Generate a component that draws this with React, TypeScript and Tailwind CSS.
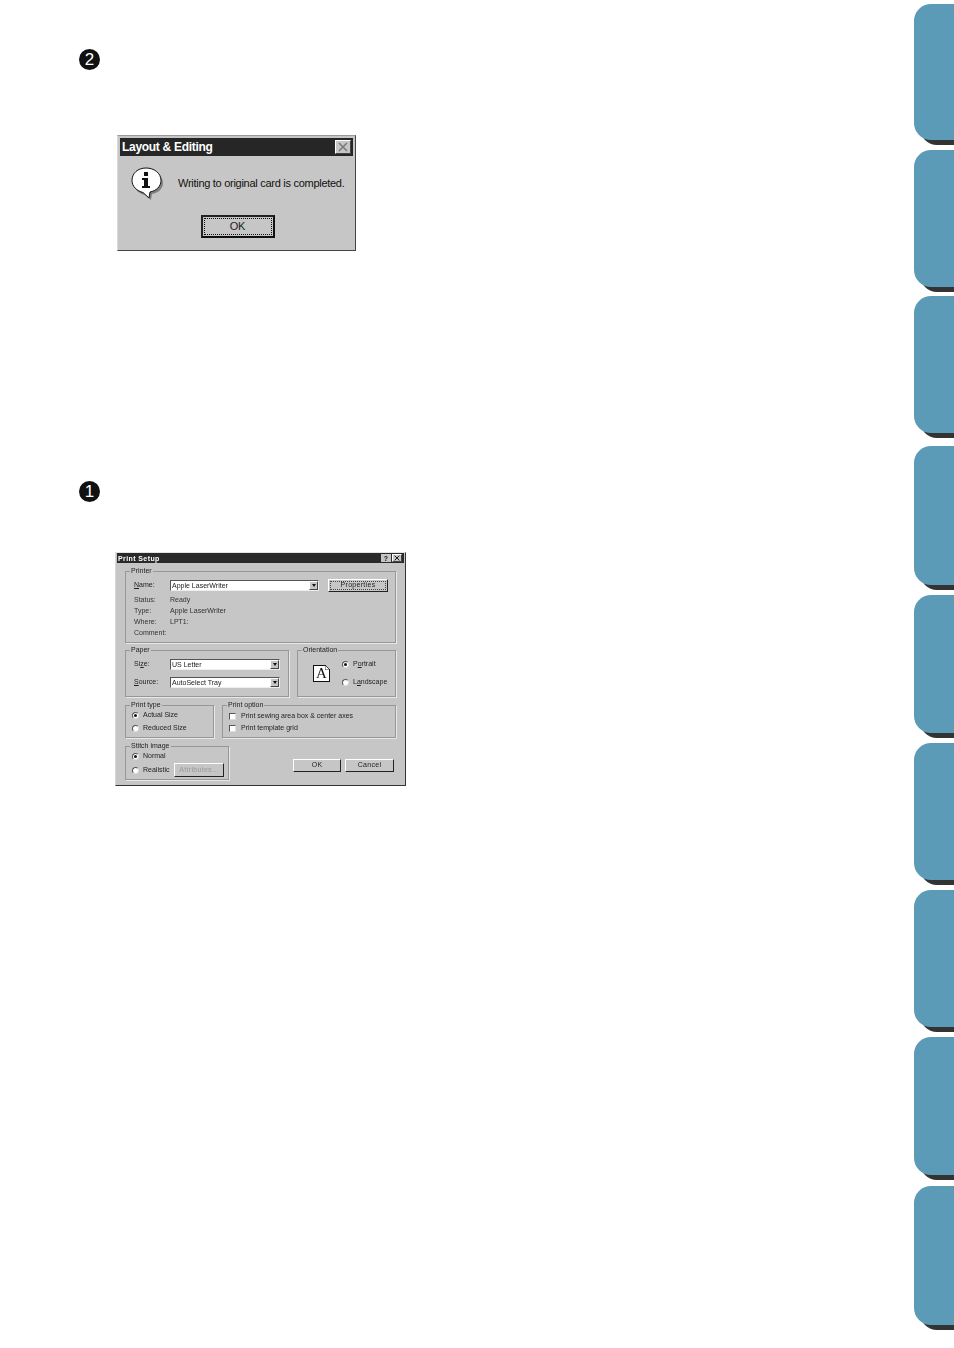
const font = { fontFamily: '"Liberation Sans", Arial, sans-serif' };

const tabs = [
  "h-[136px] mb-[10px]",
  "h-[137px] mb-[9px]",
  "h-[137px] mb-[13px]",
  "h-[139px] mb-[10px]",
  "h-[138px] mb-[10px]",
  "h-[137px] mb-[10px]",
  "h-[137px] mb-[10px]",
  "h-[138px] mb-[11px]",
  "h-[139px]",
];

function Marker({ n }: { n: number }) {
  return (
    <div className="flex h-[21px] w-[21px] items-center justify-center rounded-full bg-[#111] text-[17px] leading-none text-white">
      {n}
    </div>
  );
}

function InfoIcon() {
  return (
    <svg width="33" height="33" viewBox="0 0 33 33" className="shrink-0">
      <path d="M17 4C25 4 32 9 32 16C32 22 27 26 21 27L20 33L14 28C8 27 3 22 3 16C3 9 9 4 17 4Z" fill="#808080" />
      <path d="M15 1C23 1 30 6 30 13.500C30 19.500 25 24 19 25L18 31L12 25.500C6 24 1 19.500 1 13.500C1 6 7 1 15 1Z" fill="#fff" stroke="#111" strokeWidth="1" />
      <rect x="13" y="5" width="4" height="4" fill="#111" />
      <path d="M11 11H17V19H19V21H11V19H13V13H11Z" fill="#111" />
    </svg>
  );
}

function CloseBox({ big }: { big?: boolean }) {
  return (
    <div
      className={
        big
          ? "flex h-[14px] w-[16px] items-center justify-center border border-t-white border-l-white border-r-[#444] border-b-[#444] bg-[#c6c6c6]"
          : "flex h-[8px] w-[10px] items-center justify-center border border-t-white border-l-white border-r-[#444] border-b-[#444] bg-[#c6c6c6]"
      }
    >
      <svg viewBox="0 0 10 10" className={big ? "h-[10px] w-[10px]" : "h-[6px] w-[6px]"}>
        <path d="M1 1L9 9M9 1L1 9" stroke={big ? "#7a7a7a" : "#111"} strokeWidth="1.600" />
      </svg>
    </div>
  );
}

function MessageDialog() {
  return (
    <div className="ml-[38px] mt-[65px] h-[116px] w-[239px] border border-t-[#9a9a9a] border-l-[#d8d8d8] border-r-[#444] border-b-[#444] bg-[#c6c6c6] p-[2px]">
      <div className="flex h-[18px] items-center justify-between bg-[#262626] pl-[2px] pr-[2px]">
        <span className="text-[12px] font-bold tracking-[-0.3px] text-white">Layout &amp; Editing</span>
        <CloseBox big />
      </div>
      <div className="flex items-start pl-[11px] pt-[11px]">
        <InfoIcon />
        <span className="ml-[14px] mt-[9px] whitespace-nowrap text-[11px] leading-[14px] tracking-[-0.28px] text-[#111]">
          Writing to original card is completed.
        </span>
      </div>
      <div className="ml-[2px] mt-[15px] flex justify-center">
        <div className="flex h-[23px] w-[74px] items-center justify-center border-2 border-t-[#222] border-l-[#222] border-r-[#111] border-b-[#111] bg-[#c6c6c6] p-[1px]">
          <div className="flex h-full w-full items-center justify-center border border-dotted border-[#111] text-[11px] tracking-[-0.3px] text-[#222]">
            OK
          </div>
        </div>
      </div>
    </div>
  );
}

function Group({ title, className, children }: { title: string; className: string; children?: React.ReactNode }) {
  return (
    <fieldset className={"border border-[#979797] shadow-[1px_1px_0_#e8e8e8] " + className}>
      <legend className="ml-[4px] px-[1px] text-[7px] leading-[8px] text-[#222]">{title}</legend>
      {children}
    </fieldset>
  );
}

function Combo({ value, className }: { value: string; className: string }) {
  return (
    <div className={"flex h-[11px] items-center justify-between border border-t-[#555] border-l-[#555] border-r-[#eee] border-b-[#eee] bg-white pl-[1px] " + className}>
      <span className="text-[7px] leading-none text-[#222]">{value}</span>
      <div className="flex h-[9px] w-[9px] items-center justify-center border border-r-[#444] border-b-[#444] border-t-white border-l-white bg-[#c6c6c6]">
        <div className="h-0 w-0 border-x-[2.5px] border-t-[3px] border-x-transparent border-t-[#111]" />
      </div>
    </div>
  );
}

function Radio({ label, checked, className }: { label: React.ReactNode; checked?: boolean; className?: string }) {
  return (
    <div className={"flex items-center gap-[4px] pl-[1px] " + (className ?? "")}>
      <div className="flex h-[7px] w-[7px] shrink-0 items-center justify-center rounded-full border border-t-[#555] border-l-[#555] border-r-[#ddd] border-b-[#ddd] bg-white">
        {checked && <div className="h-[3px] w-[3px] rounded-full bg-[#111]" />}
      </div>
      <span className="whitespace-nowrap text-[7px] leading-[8px] text-[#222]">{label}</span>
    </div>
  );
}

function Check({ label }: { label: string }) {
  return (
    <div className="flex items-center gap-[5px]">
      <div className="h-[7px] w-[7px] shrink-0 border border-t-[#555] border-l-[#555] border-r-[#ddd] border-b-[#ddd] bg-white" />
      <span className="whitespace-nowrap text-[7px] leading-[8px] text-[#222]">{label}</span>
    </div>
  );
}

function Info({ label, value }: { label: string; value?: string }) {
  return (
    <div className="flex h-[11px] items-center text-[7px] text-[#333]">
      <span className="w-[36px]">{label}</span>
      <span>{value}</span>
    </div>
  );
}

function PushButton({ label, className, dim }: { label: string; className: string; dim?: boolean }) {
  return (
    <div
      className={
        "flex items-center justify-center border border-t-white border-l-white border-r-[#222] border-b-[#222] text-[7px] tracking-[0.3px] " +
        (dim ? "text-[#999] " : "text-[#222] ") +
        className
      }
    >
      {label}
    </div>
  );
}

function PrintSetup() {
  return (
    <div className="ml-[36px] mt-[50px] h-[234px] w-[291px] border border-t-[#e4e4e4] border-l-[#d8d8d8] border-r-[#333] border-b-[#333] bg-[#c6c6c6] blur-[0.3px]">
      <div className="mx-[1px] flex h-[10px] items-center justify-between bg-[#2a2a2a] pl-[1px] pr-[2px]">
        <span className="text-[7px] font-bold leading-none tracking-[0.4px] text-white">Print Setup</span>
        <div className="flex gap-[1px]">
          <div className="flex h-[8px] w-[10px] items-center justify-center bg-[#c6c6c6] text-[7px] font-bold leading-none text-[#111]">?</div>
          <CloseBox />
        </div>
      </div>
      <div className="flex flex-col gap-[3px] px-[9px] pt-[4px]">
        <Group title="Printer" className="h-[76px]">
          <div className="pl-[8px] pt-[4px]">
            <div className="flex h-[13px] items-center">
              <span className="w-[36px] text-[7px] text-[#222]">
                <span className="underline">N</span>ame:
              </span>
              <Combo value="Apple LaserWriter" className="w-[149px]" />
              <div className="ml-[9px] flex h-[13px] w-[60px] items-center justify-center border border-r-[#222] border-b-[#222] border-t-white border-l-white p-[1px]">
                <div className="flex h-full w-full items-center justify-center border border-dotted border-[#444] text-[7px] tracking-[0.3px] text-[#222]">
                  Properties
                </div>
              </div>
            </div>
            <div className="mt-[3px]">
              <Info label="Status:" value="Ready" />
              <Info label="Type:" value="Apple LaserWriter" />
              <Info label="Where:" value="LPT1:" />
              <Info label="Comment:" />
            </div>
          </div>
        </Group>
        <div className="flex gap-[8px]">
          <Group title="Paper" className="h-[51px] w-[164px]">
            <div className="flex flex-col gap-[7px] pl-[8px] pt-[5px]">
              <div className="flex items-center">
                <span className="w-[36px] text-[7px] text-[#222]">
                  Si<span className="underline">z</span>e:
                </span>
                <Combo value="US Letter" className="w-[110px]" />
              </div>
              <div className="flex items-center">
                <span className="w-[36px] text-[7px] text-[#222]">
                  <span className="underline">S</span>ource:
                </span>
                <Combo value="AutoSelect Tray" className="w-[110px]" />
              </div>
            </div>
          </Group>
          <Group title="Orientation" className="h-[51px] w-[99px]">
            <div className="flex items-center pl-[15px] pt-[6px]">
              <div className="relative flex h-[17px] w-[17px] items-center justify-center border border-[#111] bg-white font-['Liberation_Serif'] text-[15px] leading-none text-[#111]">
                A
                <svg viewBox="0 0 5 5" className="absolute right-[-1px] top-[-1px] h-[5px] w-[5px]">
                  <path d="M0 0H5V5Z" fill="#c6c6c6" />
                  <path d="M0 0V5H5Z" fill="#fff" />
                  <path d="M0 0L5 5M0 0V5H5" fill="none" stroke="#111" strokeWidth="0.800" />
                </svg>
              </div>
              <div className="ml-[11px] flex flex-col gap-[10px]">
                <Radio
                  label={
                    <>
                      P<span className="underline">o</span>rtrait
                    </>
                  }
                  checked
                />
                <Radio
                  label={
                    <>
                      L<span className="underline">a</span>ndscape
                    </>
                  }
                />
              </div>
            </div>
          </Group>
        </div>
        <div className="mt-[1px] flex gap-[8px]">
          <Group title="Print type" className="h-[37px] w-[89px]">
            <div className="flex flex-col gap-[5px] pl-[5px] pt-[2px]">
              <Radio label="Actual Size" checked />
              <Radio label="Reduced Size" />
            </div>
          </Group>
          <Group title="Print option" className="h-[37px] w-[174px]">
            <div className="flex flex-col gap-[4px] pl-[6px] pt-[3px]">
              <Check label="Print sewing area box & center axes" />
              <Check label="Print template grid" />
            </div>
          </Group>
        </div>
        <div className="mt-[1px] flex items-end justify-between">
          <Group title="Stitch image" className="h-[38px] w-[104px]">
            <div className="pl-[5px] pt-[2px]">
              <Radio label="Normal" checked />
              <div className="mt-[3px] flex items-center">
                <Radio label="Realistic" className="w-[43px]" />
                <PushButton label="Attributes..." dim className="h-[14px] w-[50px]" />
              </div>
            </div>
          </Group>
          <div className="mb-[8px] mr-[2px] flex gap-[4px]">
            <PushButton label="OK" className="h-[13px] w-[48px]" />
            <PushButton label="Cancel" className="h-[13px] w-[49px]" />
          </div>
        </div>
      </div>
    </div>
  );
}

export default function App() {
  return (
    <div className="flex h-[1348px] w-[954px] justify-between overflow-hidden bg-white" style={font}>
      <div className="pl-[79px] pt-[49px]">
        <Marker n={2} />
        <MessageDialog />
        <div className="mt-[230px]">
          <Marker n={1} />
        </div>
        <PrintSetup />
      </div>
      <div className="flex w-[40px] flex-col pt-[4px]">
        {tabs.map((t, i) => (
          <div key={i} className={"rounded-l-[17px] bg-[#5b9bb8] shadow-[6px_5px_0_#333] " + t} />
        ))}
      </div>
    </div>
  );
}
